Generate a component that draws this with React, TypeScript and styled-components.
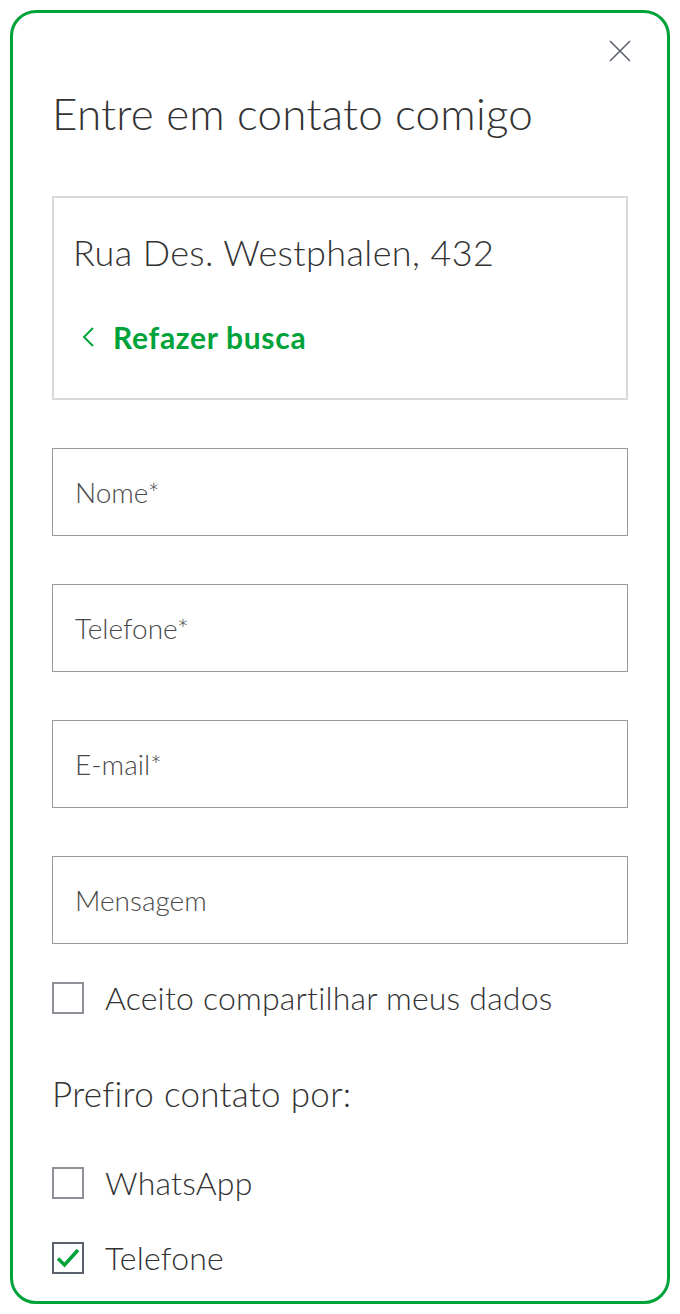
import styled, { createGlobalStyle } from "styled-components";

const GlobalStyle = createGlobalStyle`
  body {
    margin: 0;
    background: #fff;
    font-family: Lato, "Open Sans", sans-serif;
    color: #333;
  }
`;

const green = "#00a33a";

const Card = styled.div`
  margin: 10px;
  height: 1294px;
  box-sizing: border-box;
  border: 3px solid ${green};
  border-radius: 26px;
  padding: 24px 39px 0;
  display: flex;
  flex-direction: column;
`;

const TopBar = styled.div`
  display: flex;
  justify-content: flex-end;
  height: 28px;
  margin-right: -6px;
`;

const CloseButton = styled.button`
  background: none;
  border: none;
  padding: 0;
  width: 28px;
  height: 28px;
  display: flex;
  align-items: center;
  justify-content: center;
  cursor: pointer;
`;

const Title = styled.h1`
  margin: 23px 0 0;
  font-size: 44px;
  font-weight: 300;
  line-height: 50px;
  letter-spacing: 0.2px;
  color: #333;
`;

const AddressBox = styled.div`
  margin-top: 58px;
  height: 204px;
  box-sizing: border-box;
  border: 2px solid #d9d9d9;
  padding: 32px 0 0 19px;
`;

const Address = styled.div`
  font-size: 36px;
  font-weight: 300;
  line-height: 44px;
  letter-spacing: 0.4px;
  color: #333;
`;

const BackLink = styled.a`
  margin-top: 45px;
  display: flex;
  align-items: center;
  gap: 17px;
  padding-left: 9px;
  color: ${green};
  font-size: 30px;
  font-weight: 700;
  letter-spacing: 0.7px;
  text-decoration: none;
  line-height: 36px;
`;

const Fields = styled.div`
  margin-top: 48px;
  display: flex;
  flex-direction: column;
  gap: 48px;
`;

const Field = styled.input`
  height: 88px;
  box-sizing: border-box;
  border: 1px solid #999;
  border-radius: 0;
  padding: 0 22px;
  font-family: Lato, "Open Sans", sans-serif;
  font-size: 28px;
  font-weight: 300;
  color: #333;
  outline: none;
  &::placeholder {
    color: #4a4a4a;
  }
`;

const CheckRow = styled.label<{ $top: number }>`
  margin-top: ${(p) => p.$top}px;
  display: flex;
  align-items: center;
  gap: 21px;
  font-size: 32px;
  font-weight: 300;
  color: #333;
  line-height: 40px;
  letter-spacing: 0.2px;
`;

const Box = styled.span<{ $checked?: boolean }>`
  width: 32px;
  height: 32px;
  box-sizing: border-box;
  border: 2px solid ${(p) => (p.$checked ? "#5c626d" : "#8e9099")};
  display: flex;
  align-items: center;
  justify-content: center;
  flex-shrink: 0;
`;

const Subtitle = styled.h2`
  margin: 53px 0 0;
  font-size: 35px;
  font-weight: 300;
  line-height: 44px;
  letter-spacing: 0.3px;
  color: #333;
`;

function Checkbox({
  label,
  checked,
  top,
}: {
  label: string;
  checked?: boolean;
  top: number;
}) {
  return (
    <CheckRow $top={top}>
      <Box $checked={checked}>
        {checked && (
          <svg width="26" height="26" viewBox="0 0 26 26">
            <path
              d="M3 13.5 L9.5 20 L23 5"
              fill="none"
              stroke={green}
              strokeWidth="3.5"
            />
          </svg>
        )}
      </Box>
      {label}
    </CheckRow>
  );
}

export default function App() {
  return (
    <>
      <GlobalStyle />
      <Card>
        <TopBar>
          <CloseButton aria-label="Fechar">
            <svg width="22" height="22" viewBox="0 0 22 22">
              <path
                d="M1 1 L21 21 M21 1 L1 21"
                stroke="#5c626d"
                strokeWidth="1.6"
              />
            </svg>
          </CloseButton>
        </TopBar>
        <Title>Entre em contato comigo</Title>

        <AddressBox>
          <Address>Rua Des. Westphalen, 432</Address>
          <BackLink href="#">
            <svg width="14" height="22" viewBox="0 0 14 22">
              <path
                d="M11 2 L2 11 L11 20"
                fill="none"
                stroke={green}
                strokeWidth="2"
              />
            </svg>
            Refazer busca
          </BackLink>
        </AddressBox>

        <Fields>
          <Field placeholder="Nome*" />
          <Field placeholder="Telefone*" />
          <Field placeholder="E-mail*" />
          <Field placeholder="Mensagem" />
        </Fields>

        <Checkbox label="Aceito compartilhar meus dados" top={34} />

        <Subtitle>Prefiro contato por:</Subtitle>
        <Checkbox label="WhatsApp" top={48} />
        <Checkbox label="Telefone" checked top={35} />
      </Card>
    </>
  );
}
